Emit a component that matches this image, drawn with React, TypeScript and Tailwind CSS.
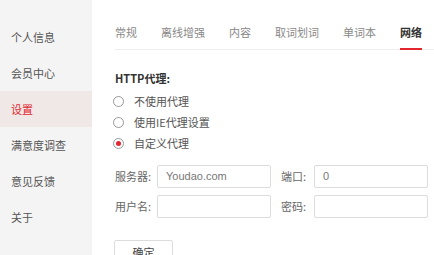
const menu = ["个人信息", "会员中心", "设置", "满意度调查", "意见反馈", "关于"];
const tabs = ["常规", "离线增强", "内容", "取词划词", "单词本", "网络"];

function Radio({ checked, label }: { checked?: boolean; label: string }) {
	return (
		<div className="flex h-[21px] items-center">
			<span className="flex h-[11px] w-[11px] items-center justify-center rounded-full border border-[#999] bg-white">
				{checked && <span className="h-[5px] w-[5px] rounded-full bg-[#e3262f]" />}
			</span>
			<span className="ml-[10px] text-[11px] text-[#555]">{label}</span>
		</div>
	);
}

function Field({ label, value, narrow }: { label: string; value?: string; narrow?: boolean }) {
	return (
		<div className="flex items-center">
			<span className={`${narrow ? "w-[33px]" : "w-[42px]"} text-[11px] text-[#666]`}>{label}</span>
			<div className="flex h-[23px] w-[114px] items-center rounded-[2px] border border-[#dcdcdc] bg-white px-[8px] font-['Liberation_Sans',sans-serif] text-[11px] text-[#777]">
				{value}
			</div>
		</div>
	);
}

export default function App() {
	return (
		<div className="flex h-[255px] w-[434px] overflow-hidden bg-white font-['Noto_Sans_CJK_SC',sans-serif]">
			<aside className="w-[92px] shrink-0 bg-[#f4f4f4] pt-[19px]">
				{menu.map((m) => (
					<div
						key={m}
						className={`flex h-[36px] items-center pl-[11px] text-[11px] ${m === "设置" ? "bg-[#efe8e7] text-[#e3262f]" : "text-[#555]"}`}
					>
						{m}
					</div>
				))}
			</aside>

			<main className="flex-1 pl-[23px]">
				<div className="mt-[24px] flex gap-[24px] border-b border-[#eeeeee]">
					{tabs.map((t) =>
						t === "网络" ? (
							<div key={t} className="-mb-px border-b-2 border-[#e3262f] pb-[6px] text-[11px] font-bold text-[#333]">
								{t}
							</div>
						) : (
							<div key={t} className="pb-[8px] text-[11px] text-[#888]">
								{t}
							</div>
						),
					)}
				</div>

				<div className="mt-[20px] text-[11px] font-bold text-[#333]">HTTP代理:</div>
				<div className="mt-[5px] -ml-[2px]">
					<Radio label="不使用代理" />
					<Radio label="使用IE代理设置" />
					<Radio checked label="自定义代理" />
				</div>

				<div className="mt-[11px] flex flex-col gap-[7px]">
					<div className="flex gap-[10px]">
						<Field label="服务器:" value="Youdao.com" />
						<Field narrow label="端口:" value="0" />
					</div>
					<div className="flex gap-[10px]">
						<Field label="用户名:" />
						<Field narrow label="密码:" />
					</div>
				</div>

				<button
					type="button"
					className="mt-[22px] -ml-px flex h-[24px] w-[59px] items-center justify-center rounded-[2px] border border-[#dcdcdc] bg-white text-[11px] text-[#444]"
				>
					确定
				</button>
			</main>
		</div>
	);
}
